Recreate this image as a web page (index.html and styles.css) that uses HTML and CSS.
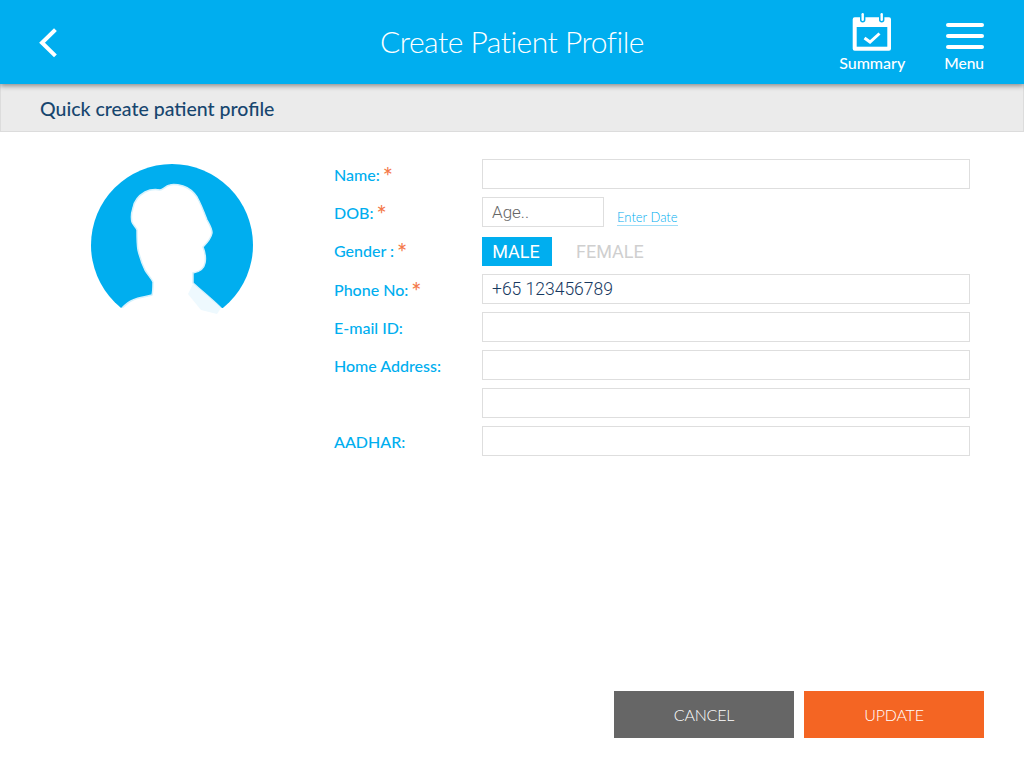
FILE: index.html
```html
<!doctype html>

<html lang="en">
<head>
  <meta charset="utf-8">
  <title>Create Patient Profile</title>
  <meta name="viewport" content="width=device-width, initial-scale=1.0">
  <link rel="stylesheet" href="styles.css">
</head>
<body>

  <header class="topbar">
    <div class="topbar-left">
      <button class="back" aria-label="Back">
        <svg width="20" height="32" viewBox="0 0 20 32"><polyline points="16,5 4,16.7 16,28.5" fill="none" stroke="#fff" stroke-width="4" stroke-linecap="square"/></svg>
      </button>
    </div>
    <h1 class="title">Create Patient Profile</h1>
    <nav class="topbar-right">
      <a class="action action-summary">
        <svg width="40" height="40" viewBox="0 0 40 40">
          <path d="M.7 7.3a2 2 0 0 1 2-2h34.3a2 2 0 0 1 2 2v29.4a2 2 0 0 1-2 2H2.7a2 2 0 0 1-2-2z" fill="#fff"/>
          <rect x="4.7" y="15" width="30.6" height="19.7" fill="#00aeef"/>
          <rect x="8" y="0" width="5.4" height="10.5" rx="2.7" fill="#00aeef"/>
          <rect x="27" y="0" width="5.4" height="10.5" rx="2.7" fill="#00aeef"/>
          <rect x="9.5" y="1" width="2.4" height="8" rx="1.2" fill="#fff"/>
          <rect x="28.5" y="1" width="2.4" height="8" rx="1.2" fill="#fff"/>
          <polyline points="12.5,26 18,30 27.5,21.5" fill="none" stroke="#fff" stroke-width="3"/>
        </svg>
        <span>Summary</span>
      </a>
      <a class="action action-menu">
        <span class="burger"><i></i><i></i><i></i></span>
        <span>Menu</span>
      </a>
    </nav>
  </header>

  <div class="subbar">Quick create patient profile</div>

  <main class="content">
    <div class="avatar">
      <svg width="162" height="162" viewBox="0 0 162 162">
        <circle cx="81" cy="81" r="81" fill="#00aeef"/>
        <path d="M79 21C74 22 72 26 69 26C63 25 58 26 54 28C47 32 43 38 42 44C40 50 40 54 41 58C42 61 45 63 46 66C46 74 46 80 47 86C49 94 51 100 54 106C57 111 60 114 62 118C62 123 62 128 61 131C54 133 48 133 42 136C37 138 34 141 31 144L26 152L136 152L130 144C122 136 112 128 102 119L102 109C108 108 113 105 114 99C115 94 114 88 112 83C116 79 120 75 121 69C121 64 118 60 116 56C113 48 110 40 106 33C102 27 98 24 92 22C88 21 83 20 79 21Z" fill="#fff" stroke="#d6f1fc" stroke-width="1.5"/>
        <rect x="0" y="144" width="162" height="18" fill="#fff"/>
        <path d="M97 130L102 120L130 144L126 150L110 146Z" fill="#eef9fe"/>
      </svg>
    </div>

    <form class="form">
      <label class="field-label">Name:<em>*</em></label>
      <input class="field" type="text">

      <label class="field-label">DOB:<em>*</em></label>
      <div class="dob">
        <input class="field field-age" type="text" placeholder="Age..">
        <a class="enter-date">Enter Date</a>
      </div>

      <label class="field-label">Gender :<em>*</em></label>
      <div class="gender">
        <span class="gender-on">MALE</span>
        <span class="gender-off">FEMALE</span>
      </div>

      <label class="field-label">Phone No:<em>*</em></label>
      <input class="field" type="text" value="+65 123456789">

      <label class="field-label">E-mail ID:</label>
      <input class="field" type="text">

      <label class="field-label">Home Address:</label>
      <input class="field" type="text">

      <span></span>
      <input class="field" type="text">

      <label class="field-label">AADHAR:</label>
      <input class="field" type="text">
    </form>
  </main>

  <footer class="actions">
    <button class="btn btn-cancel">CANCEL</button>
    <button class="btn btn-update">UPDATE</button>
  </footer>

</body>
</html>
```

FILE: styles.css
```css
html {
  height: 100%;
}

body {
  height: 100%;
  margin: 0;
  display: flex;
  flex-direction: column;
  background-color: white;
  font-family: "Lato", sans-serif;
}

/* top bar */

.topbar {
  height: 84px;
  flex: none;
  display: grid;
  grid-template-columns: 1fr auto 1fr;
  align-items: center;
  background-color: #00aeef;
  color: white;
  box-shadow: 0 2px 5px rgba(0, 0, 0, 0.4);
  position: relative;
}

.back {
  display: block;
  margin: 0 0 0 38px;
  padding: 0;
  border: 0;
  background: none;
  height: 32px;
}

.title {
  margin: -2px 0 0;
  font-size: 30px;
  font-weight: 300;
  letter-spacing: -0.5px;
}

.topbar-right {
  display: flex;
  justify-content: flex-end;
  padding: 1px 40px 0 0;
  gap: 39px;
}

.action {
  display: flex;
  flex-direction: column;
  align-items: center;
  gap: 1px;
  font-size: 16px;
  font-weight: 500;
  line-height: 20px;
}

.action-menu {
  align-items: flex-end;
  font-size: 15.5px;
}

.action svg {
  display: block;
}

.burger {
  box-sizing: border-box;
  display: flex;
  flex-direction: column;
  gap: 7px;
  width: 38px;
  height: 40px;
  padding-top: 11px;
}

.burger i {
  display: block;
  height: 4px;
  border-radius: 2px;
  background-color: white;
}

/* sub heading */

.subbar {
  box-sizing: border-box;
  height: 48px;
  flex: none;
  display: flex;
  align-items: center;
  padding: 2px 0 0 39px;
  background-color: #ebebeb;
  border: 1px solid #dcdcdc;
  border-top: 0;
  color: #17466f;
  font-size: 19.5px;
  font-weight: 500;
}

/* form */

.content {
  flex: 1;
  display: flex;
  align-items: flex-start;
  padding: 27px 0 0 91px;
}

.avatar {
  width: 162px;
  height: 162px;
  margin: 5px 81px 0 0;
}

.avatar svg {
  display: block;
}

.form {
  width: 636px;
  display: grid;
  grid-template-columns: 148px 488px;
  grid-template-rows: 30px 30px 31px repeat(5, 30px);
  row-gap: 8px;
  align-items: center;
}

.field-label {
  color: #00aeef;
  font-size: 16px;
  font-weight: 500;
}

.field-label em {
  margin-left: 3px;
  color: #f4794a;
  font-style: normal;
  font-size: 24px;
  line-height: 0;
  vertical-align: -5px;
}

.field {
  box-sizing: border-box;
  width: 100%;
  height: 30px;
  margin: 0;
  padding: 0 9px;
  border: 1px solid #dedede;
  border-radius: 0;
  outline: 0;
  background: white;
  color: #17395f;
  font-family: "Roboto", sans-serif;
  font-size: 17.5px;
  font-weight: 300;
}

.field::placeholder {
  color: #666666;
  opacity: 1;
}

.dob {
  display: flex;
  align-items: center;
}

.field-age {
  width: 122px;
  font-size: 17px;
}

.enter-date {
  margin: 11px 0 0 13px;
  border-bottom: 1px solid #9fdef8;
  color: #00aeef;
  font-size: 13px;
  font-weight: 300;
  line-height: 15px;
}

.gender {
  display: flex;
  align-items: center;
  align-self: end;
  font-family: "Roboto", sans-serif;
  font-size: 18px;
}

.gender-on {
  box-sizing: border-box;
  width: 70px;
  height: 29px;
  padding-right: 2px;
  line-height: 29px;
  text-align: center;
  background-color: #00aeef;
  color: white;
}

.gender-off {
  margin-left: 24px;
  color: #cfcfcf;
}

/* bottom buttons */

.actions {
  flex: none;
  display: flex;
  justify-content: flex-end;
  gap: 10px;
  padding: 0 40px 31px 0;
}

.btn {
  width: 180px;
  height: 47px;
  padding: 0;
  border: 0;
  color: white;
  font-family: "Lato", sans-serif;
  font-size: 16px;
  font-weight: 300;
  letter-spacing: -0.2px;
}

.btn-cancel {
  background-color: #666666;
}

.btn-update {
  background-color: #f46523;
}
```
